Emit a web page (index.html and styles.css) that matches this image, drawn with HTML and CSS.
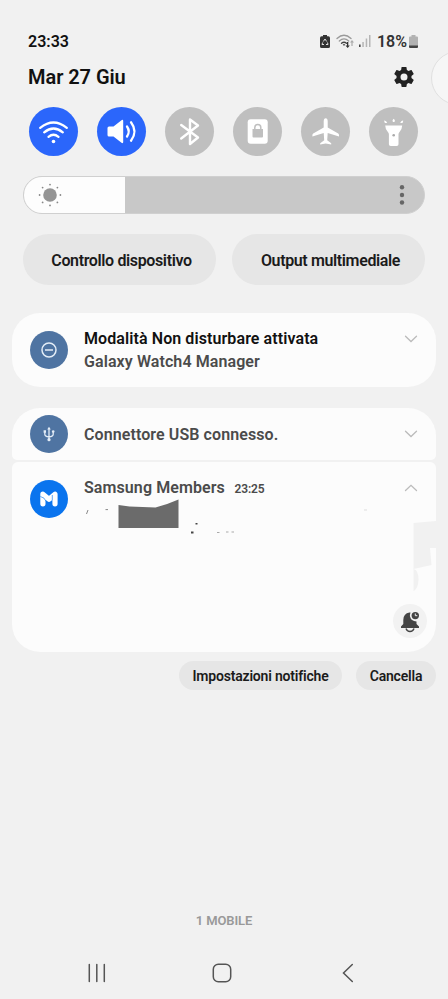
FILE: index.html
```html
<!DOCTYPE html>
<html lang="it">
<head>
<meta charset="utf-8">
<title>Pannello notifiche</title>
<link rel="stylesheet" href="styles.css">
</head>
<body>
<main class="panel">
  <header class="status">
    <span class="clock t">23:33</span>
    <span class="indicators">
      <svg class="ic-saver" width="10" height="13" viewBox="0 0 10 13"><path d="M3 0h4v1.300h1.400Q10 1.300 10 2.900v8.500Q10 13 8.400 13H1.600Q0 13 0 11.400V2.900Q0 1.300 1.600 1.300H3z" fill="#333"/><path d="M3.300 6.500 5 4l1.700 2.500M7.500 7.500 8 9.500H6M4 9.500H2L2.600 7.500" fill="none" stroke="#ddd" stroke-width="1"/></svg>
      <svg class="ic-net" width="19" height="15" viewBox="0 0 19 15"><g fill="none" stroke-linecap="round" stroke-width="1.300"><path d="M1 4.500Q8 -2 15 4.500" stroke="#999"/><path d="M3.300 7Q8 2.800 12.700 7" stroke="#999"/><path d="M5.500 9.300Q8 7.200 10.500 9.300" stroke="#444"/></g><path d="M6.700 10.300h2.600L8 11.900zM11 8h1.300v3.500h1.500L11.700 14 9.500 11.500H11z" fill="#333"/><path d="M16 6l2 2.500h-1.400V12h-1.200V8.500H14z" fill="#aaa"/></svg>
      <svg class="ic-signal" width="12" height="12" viewBox="0 0 12 12"><path d="M0 9.500h1.600V12H0z" fill="#444"/><path d="M3.300 7h1.500v5H3.300zM6.700 3.500h1.500V12H6.700zM10 0h1.500v12H10z" fill="#b5b5b5"/></svg>
      <span class="pct t">18%</span>
      <svg class="ic-batt" width="9" height="13" viewBox="0 0 9 13"><path d="M2.500 0h4v1.500H8q1 0 1 1V11H0V2.500q0-1 1-1h1.500z" fill="#b2b2b2"/><path d="M0 10.500h9V12q0 1-1 1H1q-1 0-1-1z" fill="#444"/></svg>
    </span>
  </header>
  <div class="dateline">
    <h1 class="date t">Mar 27 Giu</h1>
    <svg class="gear" width="24" height="24" viewBox="0 0 24 24"><path fill="#222" d="M19.430 12.980c.04-.32.07-.64.07-.98s-.03-.66-.07-.98l2.110-1.650c.19-.15.24-.42.12-.64l-2-3.460c-.12-.22-.39-.3-.61-.22l-2.490 1c-.52-.4-1.080-.73-1.690-.98l-.38-2.650C14.460 2.180 14.250 2 14 2h-4c-.25 0-.46.18-.49.42l-.38 2.650c-.61.25-1.170.59-1.690.98l-2.490-1c-.23-.09-.49 0-.61.22l-2 3.460c-.13.22-.07.49.12.64l2.110 1.650c-.04.32-.07.65-.07.98s.03.66.07.98l-2.110 1.650c-.19.15-.24.42-.12.64l2 3.460c.12.22.39.3.61.22l2.490-1c.52.4 1.080.73 1.690.98l.38 2.650c.03.24.24.42.49.42h4c.25 0 .46-.18.49-.42l.38-2.650c.61-.25 1.170-.59 1.690-.98l2.490 1c.23.09.49 0 .61-.22l2-3.460c.12-.22.07-.49-.12-.64zM12 15.500a3.500 3.500 0 1 1 0-7 3.500 3.500 0 0 1 0 7z"/></svg>
    <span class="edge"></span>
  </div>
  <div class="toggles">
    <span class="tg on"><svg viewBox="0 0 49 49"><g fill="none" stroke="#fff" stroke-width="2.300" stroke-linecap="round"><path d="M11.200 20.800Q24.500 10.200 37.800 20.800"/><path d="M15.200 25.300Q24.500 17.700 33.800 25.300"/><path d="M19.500 29.800Q24.500 25.800 29.500 29.800"/></g><circle cx="24.500" cy="34.500" r="1.800" fill="#fff"/></svg></span>
    <span class="tg on"><svg viewBox="0 0 49 49"><path d="M10.500 21q0-1.500 1.500-1.500h4.500l8-6.300q1.700-1 1.700.8v21q0 1.800-1.700.8l-8-6.300H12q-1.500 0-1.500-1.500z" fill="#fff"/><path d="M30 19.500Q33.500 24.500 30 29.500M34 15.300Q41 24.500 34 33.700" fill="none" stroke="#fff" stroke-width="2.300" stroke-linecap="round"/></svg></span>
    <span class="tg"><svg viewBox="0 0 49 49"><path d="M16.200 18 33 30.500 25 37V12.500L33 18.500 16.200 31.500" fill="none" stroke="#fff" stroke-width="2.400" stroke-linecap="round" stroke-linejoin="round"/></svg></span>
    <span class="tg"><svg viewBox="0 0 49 49"><rect x="14.700" y="12.300" width="20" height="24.500" rx="3" fill="#fff"/><path d="M19.500 22h10.500v7.500q0 1-1 1h-8.500q-1 0-1-1z" fill="#bfbfbf"/><path d="M21.800 22v-1.500a3 3 0 0 1 6 0V22" fill="none" stroke="#bfbfbf" stroke-width="1.500"/></svg></span>
    <span class="tg"><svg viewBox="0 0 49 49"><path d="M24.700 11.300q1.900 0 2 3v6.300l10.500 6q.8.500.8 1.500v1.300l-11.300-3.300-.5 7.200 4 3v1.200l-5.500-1-5.500 1v-1.200l4-3-.5-7.200-11.300 3.300v-1.300q0-1 .8-1.500l10.500-6v-6.300q.1-3 2-3z" fill="#fff"/></svg></span>
    <span class="tg"><svg viewBox="0 0 49 49"><path d="M16.200 18.500h17q-.2 4-2.500 6.200-1.200 1-1.200 2.500v10q0 1.800-1.800 1.800h-6q-1.800 0-1.800-1.800v-10q0-1.500-1.200-2.500-2.300-2.200-2.500-6.200z" fill="#fff"/><circle cx="24.700" cy="28.300" r="1.300" fill="#aaa"/><path d="M15.200 13.500q2.200-.2 3 2.500h-2.200q-.8-1-.8-2.500zM24.700 11.700q2 1.400.8 3.300h-1.600q-1.200-1.900.8-3.300zM34.200 13.500q-2.200-.2-3 2.500h2.200q.8-1 .8-2.500z" fill="#fff"/></svg></span>
  </div>
  <div class="slider">
    <div class="level"><svg width="26" height="26" viewBox="0 0 26 26"><circle cx="13" cy="13" r="6.800" fill="#949494"/><g fill="#888"><circle cx="13" cy="2.600" r=".9"/><circle cx="13" cy="23.400" r=".9"/><circle cx="2.600" cy="13" r=".9"/><circle cx="23.400" cy="13" r=".9"/><circle cx="5.600" cy="5.600" r=".9"/><circle cx="20.400" cy="5.600" r=".9"/><circle cx="5.600" cy="20.400" r=".9"/><circle cx="20.400" cy="20.400" r=".9"/></g></svg></div>
    <svg class="dots" width="6" height="22" viewBox="0 0 6 22"><g fill="#666"><circle cx="3" cy="3.300" r="2.200"/><circle cx="3" cy="11" r="2.200"/><circle cx="3" cy="18.500" r="2.200"/></g></svg>
  </div>
  <div class="controls">
    <button class="ctl"><span class="t">Controllo dispositivo</span></button>
    <button class="ctl"><span class="t">Output multimediale</span></button>
  </div>
  <section class="card dnd">
    <span class="badge"><svg viewBox="0 0 38 38"><g fill="none" stroke="#e4edf7" stroke-width="1.500"><circle cx="19" cy="19" r="7"/><path d="M15 19h8"/></g></svg></span>
    <div class="body"><p class="t title">Modalità Non disturbare attivata</p><p class="t">Galaxy Watch4 Manager</p></div>
    <svg class="chev" width="14" height="8" viewBox="0 0 14 8"><path d="M1.500 1.300 7 6.500l5.500-5.200"/></svg>
  </section>
  <section class="card usb">
    <span class="badge"><svg viewBox="0 0 38 38"><path d="M19 14v10.500M14.800 16.500v2.700q0 2.300 4.200 2.600 4.200-.3 4.200-2.600v-2.700" fill="none" stroke="#e4edf7" stroke-width="1.300"/><path d="M19 11.800l1.800 2.700h-3.600zM13.600 15.300h2.400v2.400h-2.400z" fill="#e4edf7"/><circle cx="23.200" cy="16.500" r="1.300" fill="#e4edf7"/><circle cx="19" cy="24.700" r="1.600" fill="#e4edf7"/></svg></span>
    <div class="body"><p class="t">Connettore USB connesso.</p></div>
    <svg class="chev" width="14" height="8" viewBox="0 0 14 8"><path d="M1.500 1.300 7 6.500l5.500-5.200"/></svg>
  </section>
  <section class="card members">
    <svg class="scraps" width="424" height="190" viewBox="12 462 424 190">
      <path d="M118.500 505l11 1.500 26 1q13-3.500 23-8V528h-60z" fill="#6b6b6b"/>
      <path d="M88 510l-1.500 4M105.500 509.600h2.500" stroke="#888" fill="none"/>
      <path d="M195.500 523h2v1.500h-2zM191 531.500h2.500v2H191z" fill="#444"/>
      <path d="M217 532.500h2.500M226 532h2.500M231.500 532h2.500" stroke="#aaa"/>
      <path d="M364 510h3" stroke="#ddd"/>
      <path d="M413.500 523l22.500-2v27h-6l1.500 17-18 4zM413.500 569q5 1 5 11-.5 9-5 11z" fill="#f1f1f1"/>
    </svg>
    <span class="badge blue"><svg viewBox="0 0 38 38"><path d="M12.900 23.800V14.200L19 19.300l6-5.100v9.600" fill="none" stroke="#fff" stroke-width="5.200" stroke-linecap="round" stroke-linejoin="round"/><path d="M10.300 16.500q4.500.8 5.800 5M22.300 20v-5" fill="none" stroke="#2384ee" stroke-width=".7"/></svg></span>
    <div class="body"><p class="line"><span class="t">Samsung Members</span><span class="t time">23:25</span></p></div>
    <svg class="chev" width="14" height="8" viewBox="0 0 14 8"><path d="M1.500 6.500 7 1.300l5.500 5.200"/></svg>
    <span class="bell"><svg width="34" height="34" viewBox="0 0 34 34"><path d="M16.500 8.500q-6.200 1-6.200 7.500v4L8 22.500V24h18v-1.500L23.500 20v-2.500q-5.500-.5-6.500-5-.2-2 .5-4z" fill="#444"/><path d="M13 24.500q1 3 4 3t4-3" fill="none" stroke="#444" stroke-width="1.400"/><circle cx="22.300" cy="11.600" r="3.700" fill="#444"/><path d="M22.300 9.500v2.200h2" fill="none" stroke="#eee" stroke-width="1"/></svg></span>
  </section>
  <div class="chips"><button class="chip"><span class="t">Impostazioni notifiche</span></button><button class="chip small"><span class="t">Cancella</span></button></div>
  <p class="carrier"><span class="t">1 MOBILE</span></p>
  <nav class="nav">
    <svg width="20" height="20" viewBox="0 0 20 20"><path d="M2.300 1.500v17M9.800 1.500v17M17.300 1.500v17"/></svg>
    <svg width="20" height="20" viewBox="0 0 20 20"><rect x="1.300" y="1.300" width="17.400" height="17.400" rx="5"/></svg>
    <svg width="20" height="20" viewBox="0 0 20 20"><path d="M14.300 1.500 5.500 10l8.800 8.500"/></svg>
  </nav>
</main>
</body>
</html>
```
FILE: styles.css
```css
* { box-sizing: border-box; }
body { margin: 0; background: #f1f1f1; font-family: Roboto, sans-serif; color: #111; }
p, h1 { margin: 0; }
svg { display: block; flex: none; }
button { border: 0; padding: 0; font-family: inherit; }
.t { white-space: nowrap; font-weight: 600; }
.panel { width: 448px; height: 999px; padding-top: 28px; overflow: hidden; }
.status { height: 26px; display: flex; align-items: center; justify-content: space-between; padding: 0 30px 0 28px; }
.clock { font-size: 16px; }
.indicators { display: flex; align-items: center; }
.ic-net { margin-left: 6px; }
.ic-signal { margin-left: 4px; }
.pct { font-size: 16px; margin: 0 2px 0 6px; color: #333; }
.dateline { position: relative; height: 46px; display: flex; align-items: center; justify-content: space-between; padding: 0 32px 0 28px; }
.date { font-size: 20px; letter-spacing: -0.05px; }
.edge { position: absolute; left: 431px; top: -3px; width: 54px; height: 54px; border: 1px solid #e0e0e0; border-radius: 50%; background: #f6f6f6; }
.toggles { display: flex; gap: 19px; margin: 7px 0 0 29px; }
.tg { width: 49px; height: 49px; border-radius: 50%; background: #bfbfbf; }
.tg.on { background: #2b66fb; }
.slider { display: flex; align-items: center; justify-content: space-between; margin: 20px 23px 0; height: 38px; border-radius: 19px; border: 1px solid #d0d0d0; background: #c8c8c8; overflow: hidden; }
.level { width: 100.5px; height: 38px; padding-left: 13px; display: flex; align-items: center; background: #fdfdfd; }
.dots { margin-right: 19px; }
.controls { display: flex; gap: 16px; margin: 20px 23px 0; }
.ctl { flex: 1; height: 51px; padding: 1px 0 0 4px; border-radius: 26px; background: #e6e6e6; color: #1b1b1b; font-size: 16px; letter-spacing: -0.37px; }
.card { position: relative; display: flex; margin: 0 12px; padding: 0 18.5px 0 18px; background: #fcfcfc; }
.badge { flex: none; width: 38px; height: 38px; border-radius: 50%; background: #4f74a2; }
.blue { background: #0a74ee; }
.body { flex: 1; margin-left: 16px; font-size: 16px; line-height: 23px; letter-spacing: 0.09px; color: #4b4b4b; }
.title { color: #111; }
.chev { fill: none; stroke: #bbb; stroke-width: 1.300; stroke-linecap: round; }
.dnd { height: 74px; margin-top: 28px; border-radius: 28px; padding-top: 18px; }
.dnd .body { margin-top: -4px; }
.dnd .chev { margin-top: 4px; }
.usb { height: 52px; margin-top: 21px; border-radius: 28px 28px 5px 5px; align-items: center; }
.members { height: 190px; margin-top: 2px; border-radius: 6px 6px 28px 28px; padding-top: 18px; }
.members .body { margin-top: -4px; }
.line { display: flex; align-items: baseline; }
.time { font-size: 12px; margin-left: 9.5px; letter-spacing: -0.1px; }
.members .chev { margin-top: 4px; }
.scraps { position: absolute; left: 0; top: 0; }
.bell { position: absolute; right: 9px; bottom: 14px; width: 34px; height: 34px; border-radius: 50%; background: #f2f2f2; }
.chips { display: flex; justify-content: flex-end; gap: 14px; margin: 9px 12px 0; }
.chip { width: 163px; height: 29px; padding: 0; border-radius: 15px; background: #e6e6e6; color: #1b1b1b; font-size: 14px; letter-spacing: -0.19px; }
.small { width: 80px; }
.carrier { margin-top: 221px; height: 20px; line-height: 20px; text-align: center; font-size: 13px; letter-spacing: -0.1px; color: #999; }
.nav { display: flex; justify-content: space-between; margin: 31.5px 90px 0 86.5px; fill: none; stroke: #555; stroke-width: 1.500; stroke-linecap: round; }
```
